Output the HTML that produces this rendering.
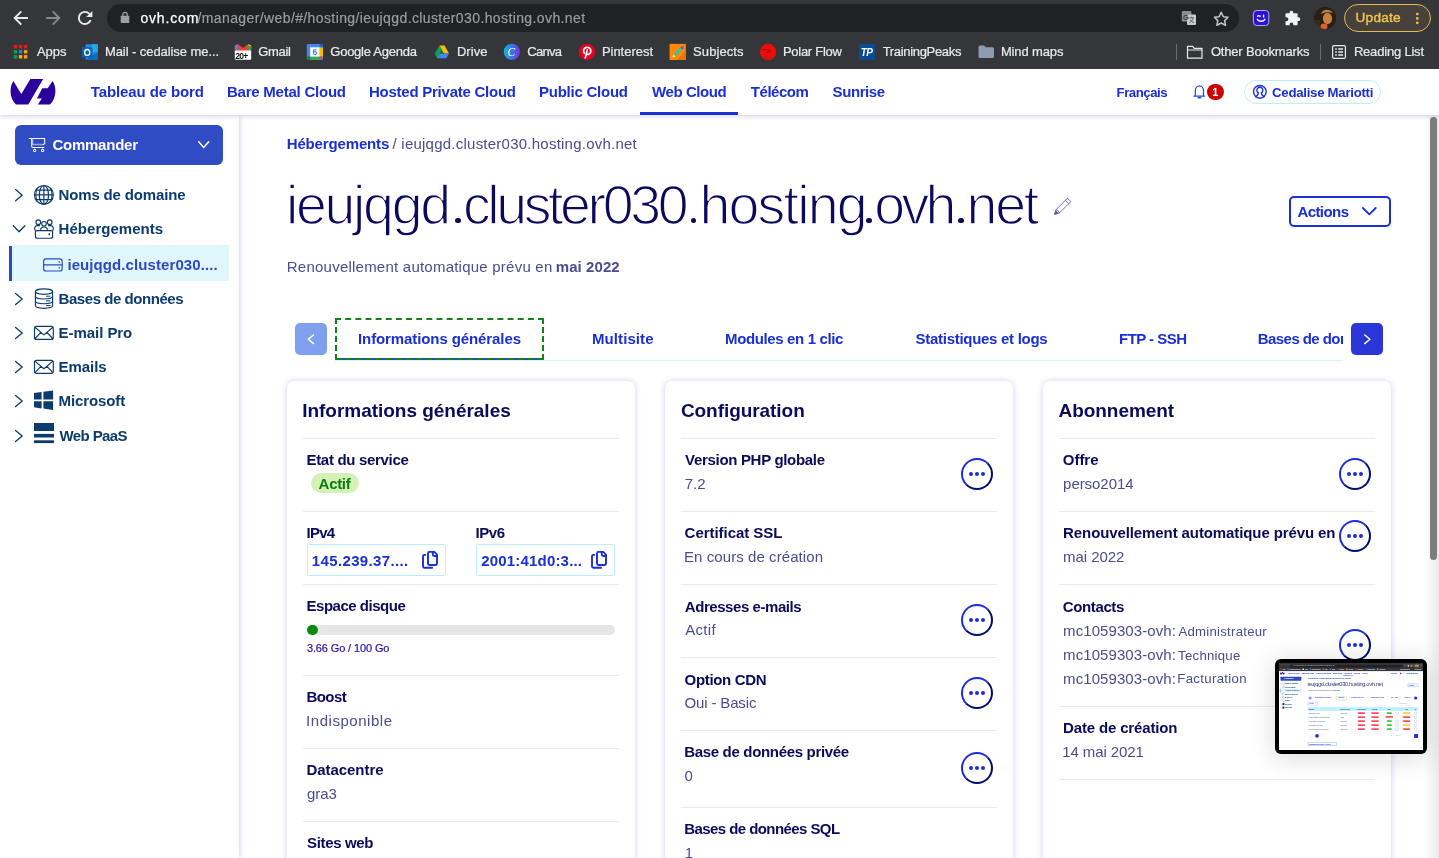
<!DOCTYPE html>
<html lang="fr"><head><meta charset="utf-8"><title>OVH Manager</title>
<style>
html,body{margin:0;padding:0}
body{width:1439px;height:858px;overflow:hidden;position:relative;background:#fff;font-family:"Liberation Sans",sans-serif}
.a{position:absolute}
.t{position:absolute;white-space:nowrap;line-height:1}
.hr{position:absolute;height:1px;background:#ebebee}
.card{position:absolute;top:381px;width:348px;height:520px;background:#fff;border-radius:7px;box-shadow:0 0 6px 0 rgba(0,14,156,.2)}
.dots{position:absolute;width:28px;height:28px;border-radius:50%;border:2px solid;border-color:#1c2cdc #00106e #00106e #1c2cdc}
.dots i{position:absolute;top:12px;width:4px;height:4px;border-radius:50%;background:#1c2cdc}
svg{position:absolute;overflow:visible}
</style></head><body><div id="root" class="a" style="left:0;top:0;width:1439px;height:858px;overflow:hidden;will-change:transform">

<!-- ===== page: sidebar ===== -->
<div class="a" style="left:0;top:115px;width:239px;height:743px;background:#fff;box-shadow:1px 0 5px 0 rgba(0,14,156,.18)"></div>
<div class="a" style="left:15px;top:125px;width:208px;height:40px;border-radius:6px;background:#2f4cc4"></div>
<div class="a" style="left:9px;top:245px;width:220px;height:36px;background:#e0f6fd"></div>
<div class="a" style="left:9px;top:246px;width:3px;height:35px;background:#2e49c2"></div>
<svg class="a" style="left:0;top:0" width="240" height="858" viewBox="0 0 240 858" fill="none" stroke="#0c3b6e" stroke-width="1.3" stroke-linecap="round" stroke-linejoin="round">
<path d="M15.6 189.6 L22.2 195.2 L15.6 200.79999999999998"/>
<path d="M15.6 293.4 L22.2 299 L15.6 304.6"/>
<path d="M15.6 327.4 L22.2 333 L15.6 338.6"/>
<path d="M15.6 361.4 L22.2 367 L15.6 372.6"/>
<path d="M15.6 395.4 L22.2 401 L15.6 406.6"/>
<path d="M15.6 430.4 L22.2 436 L15.6 441.6"/>
<path d="M13.3 225.8 L19.1 231.7 L24.9 225.8"/>
<g stroke-width="1.2"><circle cx="43.9" cy="194.9" r="9.4"/><ellipse cx="43.9" cy="194.9" rx="4.6" ry="9.4"/><path d="M43.9 185.5V204.3M34.5 194.9H53.3M35.7 190.20000000000002H52.099999999999994M35.7 199.6H52.099999999999994"/><path d="M36.699999999999996 188.9Q34.9 194.9 36.699999999999996 200.9M51.1 188.9Q52.9 194.9 51.1 200.9" stroke-width=".9"/></g>
<g stroke-width="1.15"><circle cx="38.3" cy="222.2" r="2.3"/><circle cx="44" cy="223.8" r="2.3"/><circle cx="49.7" cy="222.2" r="2.3"/><path d="M35.3 230.5 C34 229 34.6 226 37 225.6 L39.5 225.6 M52.7 230.5 C54 229 53.4 226 51 225.6 L48.5 225.6 M40.6 229.5 C40.8 227.6 42 227 44 227 C46 227 47.2 227.6 47.4 229.5"/><rect x="35.4" y="230.6" width="17.2" height="7.6" rx="2"/><path d="M49.3 233.8v.9" stroke-width="1.4"/></g>
<g stroke-width="1.15"><ellipse cx="44" cy="291.6" rx="8.6" ry="2.7"/><path d="M35.4 291.6V305.6C35.4 307.2 39.2 308.3 44 308.3S52.6 307.2 52.6 305.6V291.6"/><path d="M35.4 296.3C35.4 297.9 39.2 299 44 299S52.6 297.9 52.6 296.3M35.4 301C35.4 302.6 39.2 303.7 44 303.7S52.6 302.6 52.6 301"/><path d="M46.5 296.2h3.5M46.5 300.9h3.5M46.5 305.6h3.5" stroke-width="1"/></g>
<g stroke-width="1.15"><rect x="34.5" y="326.4" width="18.8" height="13" rx="2"/><path d="M35.2 327.5L43.9 334.9L52.6 327.5M35.2 338.5L40.8 332.4M52.6 338.5L47 332.4"/></g>
<g stroke-width="1.15"><rect x="34.5" y="360.3" width="18.8" height="13" rx="2"/><path d="M35.2 361.40000000000003L43.9 368.8L52.6 361.40000000000003M35.2 372.40000000000003L40.8 366.3M52.6 372.40000000000003L47 366.3"/></g>
<g fill="#0c3b6e" stroke="none"><path d="M34 393.1L41.6 392V399.6H34Z M43.4 391.8L53.1 390.4V399.6H43.4Z M34 401.3H41.6V408.4L34 407.3Z M43.4 401.3H53.1V410L43.4 408.6Z"/></g>
<g fill="#0c3b6e" stroke="none"><rect x="34" y="423" width="20" height="8"/><rect x="34" y="433.9" width="20" height="3.6"/><rect x="34" y="440.3" width="20" height="2.8"/></g>
<g stroke="#2e49c2" stroke-width="1.15"><rect x="43.6" y="258.8" width="18.6" height="12.2" rx="2.6"/><path d="M43.8 264.9H62"/><path d="M59.2 261.6v.6M59.2 267.5v.6" stroke-width="1.3"/></g>
<g stroke="#fff" stroke-width="1.05" stroke-linecap="round" stroke-linejoin="round"><path d="M29.3 138.5H44.7V143.5L43.3 144.7"/><path d="M31.7 138.7V146.2Q31.7 147.4 32.9 147.4H43.8"/><path d="M32.6 139.3V144.4H43" stroke-opacity=".5" stroke-width="1.5" stroke-linecap="butt"/><circle cx="34.6" cy="150.4" r="1.15"/><circle cx="42.6" cy="150.4" r="1.15"/></g>
<path d="M198.7 141.7L203.7 147.5L208.7 141.7" stroke="#fff" stroke-width="1.45"/>
</svg>

<!-- ===== page: header area ===== -->
<div class="a" style="left:1289px;top:195.5px;width:98px;height:27px;border:2px solid #1a2fd6;border-radius:5px"></div>


<!-- tabs -->
<div class="a" style="left:335px;top:360px;width:1008px;height:1px;background:#d6f3fc"></div>
<div class="a" style="left:336px;top:358px;width:207px;height:2px;background:#2e49c2"></div>
<div class="a" style="left:335px;top:318px;width:205px;height:38px;border:2px dashed #138413"></div>
<div class="a" style="left:295px;top:323px;width:32px;height:32px;border-radius:5px;background:#7fa0ee"></div>
<div class="a" style="left:1351px;top:323px;width:32px;height:32px;border-radius:5px;background:#2a36d8"></div>
<div class="a" style="left:1258px;top:328px;width:85px;height:24px;overflow:hidden"><span class="t" style="left:-.2px;top:3.2px;font-size:15px;font-weight:700;color:#1a2fd6;letter-spacing:-.57px">Bases de données</span></div>

<!-- cards -->
<div class="card" style="left:287px"></div>
<div class="card" style="left:665px"></div>
<div class="card" style="left:1043px"></div>
<div class="hr" style="left:303px;top:438px;width:316px"></div>
<div class="hr" style="left:303px;top:511px;width:316px"></div>
<div class="hr" style="left:303px;top:584px;width:316px"></div>
<div class="hr" style="left:303px;top:675px;width:316px"></div>
<div class="hr" style="left:303px;top:748px;width:316px"></div>
<div class="hr" style="left:303px;top:821px;width:316px"></div>
<div class="hr" style="left:681px;top:438px;width:316px"></div>
<div class="hr" style="left:681px;top:511px;width:316px"></div>
<div class="hr" style="left:681px;top:584px;width:316px"></div>
<div class="hr" style="left:681px;top:657px;width:316px"></div>
<div class="hr" style="left:681px;top:730px;width:316px"></div>
<div class="hr" style="left:681px;top:807px;width:316px"></div>
<div class="hr" style="left:1059px;top:438px;width:316px"></div>
<div class="hr" style="left:1059px;top:511px;width:316px"></div>
<div class="hr" style="left:1059px;top:584px;width:316px"></div>
<div class="hr" style="left:1059px;top:706px;width:316px"></div>
<div class="hr" style="left:1059px;top:779px;width:316px"></div>
<div class="a" style="left:311px;top:473px;width:48px;height:20px;border-radius:10px;background:#d2f2b6"></div>
<div class="a" style="left:307px;top:544px;width:137px;height:30px;border:1px solid #bdeefe;border-radius:2px"></div>
<div class="a" style="left:476px;top:544px;width:137px;height:30px;border:1px solid #bdeefe;border-radius:2px"></div>
<div class="a" style="left:307px;top:625px;width:308px;height:10px;border-radius:5px;background:#e6e6e6"></div>
<div class="a" style="left:307px;top:625px;width:11px;height:10px;border-radius:5px;background:#0b8b0b"></div>
<div class="dots" style="left:961px;top:458px"><i style="left:6px"></i><i style="left:12px"></i><i style="left:18px"></i></div>
<div class="dots" style="left:961px;top:604px"><i style="left:6px"></i><i style="left:12px"></i><i style="left:18px"></i></div>
<div class="dots" style="left:961px;top:677px"><i style="left:6px"></i><i style="left:12px"></i><i style="left:18px"></i></div>
<div class="dots" style="left:961px;top:752px"><i style="left:6px"></i><i style="left:12px"></i><i style="left:18px"></i></div>
<div class="dots" style="left:1339px;top:458px"><i style="left:6px"></i><i style="left:12px"></i><i style="left:18px"></i></div>
<div class="dots" style="left:1339px;top:520px"><i style="left:6px"></i><i style="left:12px"></i><i style="left:18px"></i></div>
<div class="dots" style="left:1339px;top:629px"><i style="left:6px"></i><i style="left:12px"></i><i style="left:18px"></i></div>

<svg class="a" style="left:0;top:0" width="1439" height="600" viewBox="0 0 1439 600" fill="none" stroke-linecap="round" stroke-linejoin="round">
<g stroke="#5a5aaa" stroke-width=".85"><path d="M1054.8 214L1056.3 209.4L1067.5 198.2L1070.9 201.6L1059.6 212.7Z"/><path d="M1065.4 200.3L1068.7 203.6M1056.3 209.4L1059.6 212.7"/><path d="M1054.8 214L1055.8 210.9L1057.9 213Z" fill="#4a4aa0"/></g>
<path stroke="#1a2fd6" stroke-width="1.8" d="M1362.9 208L1369.3 214.4L1375.7 208"/>
<path stroke="#fff" stroke-width="1.4" d="M313.5 335 L308.3 339.3 L313.5 343.6"/>
<path stroke="#fff" stroke-width="1.4" d="M1364.7 335 L1369.9 339.3 L1364.7 343.6"/>
<g stroke="#1a2fd6" stroke-width="1.9" stroke-linecap="round" stroke-linejoin="round"><path d="M428.0 553.4Q428.0 551.9 429.2 551.9H434.3L437.0 554.6V563.6Q437.0 565 435.5 565H429.5Q428.0 565 428.0 563.6Z"/><path d="M432.8 552.3V554.5Q432.8 556 434.3 556H436.7"/><path d="M425.3 554.9H424.4Q423.0 554.9 423.0 556.3V566.3Q423.0 567.7 424.4 567.7H432.1"/></g>
<g stroke="#1a2fd6" stroke-width="1.9" stroke-linecap="round" stroke-linejoin="round"><path d="M597.0 553.4Q597.0 551.9 598.5 551.9H603.3L606.0 554.6V563.6Q606.0 565 604.5 565H598.5Q597.0 565 597.0 563.6Z"/><path d="M601.8 552.3V554.5Q601.8 556 603.3 556H605.7"/><path d="M594.3 554.9H593.4Q592.0 554.9 592.0 556.3V566.3Q592.0 567.7 593.4 567.7H601.1"/></g>
</svg>

<!-- scrollbar -->
<div class="a" style="left:1424px;top:115px;width:15px;height:743px;background:linear-gradient(90deg,#fff,#f3f3f4 60%,#e9e9eb)"></div>
<div class="a" style="left:1430px;top:117px;width:7px;height:443px;border-radius:4px;background:#7b7c7e"></div>

<!-- ===== OVH top nav ===== -->
<div class="a" style="left:0;top:69px;width:1439px;height:46px;background:#fff;box-shadow:0 1px 5px 0 rgba(0,14,156,.2)"></div>
<div class="a" style="left:640px;top:112px;width:98px;height:3px;background:#1a2fd6"></div>
<div class="a" style="left:1244px;top:80px;width:135px;height:22px;border:1px solid #bdeefe;border-radius:12px"></div>
<div class="a" style="left:1207.2px;top:83.6px;width:16.6px;height:16.6px;border-radius:50%;background:#cc0000"></div>
<svg class="a" style="left:0;top:0" width="1439" height="120" viewBox="0 0 1439 120" fill="none">
<path fill="#2a009e" d="M13.4 80.9 L21.3 93.9 L30.4 79 H43.2 L28.3 104.6 H16 C9.3 98 9.3 87 13.4 80.9Z M52.6 80.9 L47.7 88.3 H42.3 L36.9 98.6 H41.8 L37.9 104.6 H50 C56.7 98 56.7 87 52.6 80.9Z"/>
<g stroke="#2746de" stroke-width="1.25" stroke-linecap="round" stroke-linejoin="round"><path d="M1193.9 96.1H1204.7M1195.3 96V90.8A4.1 4.9 0 0 1 1203.5 90.8V96"/><path d="M1198.2 97.7H1200.6" stroke-width="1.5"/></g>
<g stroke="#1a2fd6" stroke-width="1.4" stroke-linecap="round"><circle cx="1259.85" cy="91.85" r="6.35"/><path d="M1258.4 92.9A3 3 0 1 1 1261.3 92.9C1261.4 94.8 1262.6 95.6 1263.9 96.7M1258.4 92.9C1258.3 94.8 1257.1 95.6 1255.8 96.7"/></g>
</svg>

<!-- ===== browser chrome ===== -->
<div class="a" style="left:0;top:0;width:1439px;height:69px;background:#35363a"></div>
<div class="a" style="left:107px;top:4px;width:1132px;height:28px;border-radius:14px;background:#202124"></div>
<div class="a" style="left:1343.5px;top:3.8px;width:85.5px;height:26.4px;border:1px solid #e5b94e;border-radius:14px;background:rgba(241,193,80,.09)"></div>
<div class="a" style="left:1176px;top:44px;width:1px;height:16px;background:#6b6d71"></div>
<div class="a" style="left:1320px;top:44px;width:1px;height:16px;background:#6b6d71"></div>
<svg class="a" style="left:0;top:0" width="1439" height="69" viewBox="0 0 1439 69" fill="none" stroke-linecap="butt" stroke-linejoin="miter" font-family="Liberation Sans, sans-serif">
<path stroke="#e8eaed" stroke-width="1.9" d="M27.9 18H15.6M21.3 11.4L14.7 18L21.3 24.6"/>
<path stroke="#87898c" stroke-width="1.9" d="M46.1 18H58.4M52.7 11.4L59.3 18L52.7 24.6"/>
<path stroke="#e8eaed" stroke-width="1.9" d="M90.6 20.2A6.1 6.1 0 1 1 89.4 13.8"/><path fill="#e8eaed" d="M92.4 10.9V17.1H86.2Z"/>
<rect x="120.7" y="15.7" width="8.6" height="7.3" rx=".8" fill="#9aa0a6"/><path stroke="#9aa0a6" stroke-width="1.3" d="M122.8 15.9V14.6A2.2 2.2 0 0 1 127.2 14.6V15.9"/>
<rect x="1181.8" y="11" width="9.6" height="10.6" rx="1" fill="#8a8d92"/><rect x="1187" y="14.6" width="9" height="10.4" rx="1" fill="#c7c9cc"/><text x="1183" y="19.6" font-size="7.5" font-weight="700" fill="#35363a">G</text><path stroke="#55575b" stroke-width=".9" d="M1189.2 17.8h4.8M1191.6 16.8v1M1193.2 18c-.5 2-1.8 3.6-3.8 4.6M1190.4 19.8c.8 1.3 2 2.3 3.6 2.9"/>
<path stroke="#c4c7cb" stroke-width="1.5" stroke-linejoin="round" d="M1221.2 12.3L1223.3 16.7L1228 17.3L1224.6 20.6L1225.5 25.3L1221.2 23L1216.9 25.3L1217.8 20.6L1214.4 17.3L1219.1 16.7Z"/>
<rect x="1253.4" y="10.5" width="15.4" height="15" rx="3.4" fill="#2b10d6" stroke="#cfd0ff" stroke-width=".8"/><path stroke="#fff" stroke-width="1.4" stroke-linecap="round" d="M1257.3 19.3C1259 21.8 1263.2 21.8 1264.9 19.3M1263.6 15.3v1.6M1257.6 16.3c.8-.9 1.7-.9 2.5 0"/>
<path fill="#f1f3f4" d="M1291.4 10.7a1.8 1.8 0 0 1 1.8 1.8v.7h3.3a1.1 1.1 0 0 1 1.1 1.1v3h.8a1.9 1.9 0 0 1 0 3.8h-.8v3.1a1.1 1.1 0 0 1-1.1 1.1h-3.1v-.9a1.9 1.9 0 0 0-3.8 0v.9h-3a1.1 1.1 0 0 1-1.1-1.1v-3h.9a1.95 1.95 0 0 0 0-3.9h-.9v-3a1.1 1.1 0 0 1 1.1-1.1h3v-.7a1.8 1.8 0 0 1 1.8-1.8z"/>
<defs><clipPath id="av"><circle cx="1325.2" cy="18" r="11"/></clipPath><linearGradient id="cv" x1="0" x2="1"><stop offset="0" stop-color="#16b5dc"/><stop offset=".45" stop-color="#2f7ee6"/><stop offset="1" stop-color="#7a2be6"/></linearGradient></defs>
<g clip-path="url(#av)"><rect x="1314" y="7" width="23" height="23" fill="#2a1d16"/><ellipse cx="1327.5" cy="18.5" rx="4.6" ry="5.8" fill="#c9803e"/><path d="M1321 14c1-5 9-6 12-1c-3-1.5-8-1-12 1z" fill="#a88a4a"/><ellipse cx="1324" cy="26.5" rx="3.5" ry="3" fill="#d9652a"/><rect x="1314" y="20" width="6" height="10" fill="#3b2a1a"/></g>
<circle cx="1417.3" cy="14" r="1.35" fill="#f1c150"/>
<circle cx="1417.3" cy="18.4" r="1.35" fill="#f1c150"/>
<circle cx="1417.3" cy="22.8" r="1.35" fill="#f1c150"/>
<rect x="13.8" y="45.00" width="3.4" height="3.4" fill="#ea1a1a"/>
<rect x="18.85" y="45.00" width="3.4" height="3.4" fill="#ea1a1a"/>
<rect x="23.9" y="45.00" width="3.4" height="3.4" fill="#ea1a1a"/>
<rect x="13.8" y="50.05" width="3.4" height="3.4" fill="#0aa34c"/>
<rect x="18.85" y="50.05" width="3.4" height="3.4" fill="#1a86f5"/>
<rect x="23.9" y="50.05" width="3.4" height="3.4" fill="#ffa000"/>
<rect x="13.8" y="55.1" width="3.4" height="3.4" fill="#0aa34c"/>
<rect x="18.85" y="55.1" width="3.4" height="3.4" fill="#ffb400"/>
<rect x="23.9" y="55.1" width="3.4" height="3.4" fill="#ffa000"/>
<rect x="85.5" y="44.2" width="12.3" height="15.6" rx="1" fill="#1490df"/><path d="M91.6 44.2h6.2v7.8h-6.2z" fill="#28a8ea"/><path d="M85.5 59.8l12.3-7.8v6.8a1 1 0 0 1-1 1z" fill="#0a6ebd"/><rect x="82" y="47.2" width="10.4" height="10.4" rx="1" fill="#0f5fb8"/><ellipse cx="87.2" cy="52.4" rx="2.6" ry="2.9" stroke="#fff" stroke-width="1.3"/>
<path d="M234.8 45.5l3-1.5l5.2 4l5.2-4l3 1.5v5.5h-16.4z" fill="#ea4335"/><path d="M234.8 45.5l3-1.2v7h-3z" fill="#4285f4"/><path d="M251.2 45.5l-3-1.2v7h3z" fill="#34a853"/><path d="M248.2 44.2l3 1.3l-1 .8l-2-1z" fill="#fbbc04"/><path d="M237.8 45.2L243 49.2L248.2 45.2V48.2L243 52L237.8 48.2Z" fill="#ea4335"/><rect x="234.8" y="50.5" width="16.4" height="9.2" rx="1" fill="#fff"/><text x="235.2" y="58.6" font-size="8.6" font-weight="700" letter-spacing="-.7" fill="#111">20+</text>
<rect x="306.8" y="43.9" width="16.2" height="16.1" rx="1.6" fill="#4285f4"/><rect x="319.6" y="47.3" width="3.4" height="9.3" fill="#fbbc04"/><rect x="310.2" y="56.6" width="9.4" height="3.4" fill="#34a853"/><path d="M306.8 56.6h3.4v3.4h-1.8a1.6 1.6 0 0 1-1.6-1.6z" fill="#188038"/><path d="M319.6 56.6h3.4l-3.4 3.4z" fill="#ea4335"/><path d="M319.6 43.9h1.8a1.6 1.6 0 0 1 1.6 1.6v1.8h-3.4z" fill="#1967d2"/><rect x="310.2" y="47.3" width="9.4" height="9.3" fill="#fff"/><text x="312.4" y="55.3" font-size="8.6" font-weight="700" fill="#4285f4">6</text>
<path d="M439.3 45.6h5.2l4.5 7.9h-5.2z" fill="#fbbc04"/><path d="M439.3 45.6l2.6 4.5l-4.7 8.1l-2.5-4.4z" fill="#0f9d58"/><path d="M437.2 58.2l2.6-4.7h9.2l-2.6 4.7z" fill="#4285f4"/><path d="M441.9 50.1l1.9 3.4h-3.9z" fill="#188038" opacity=".6"/>
<circle cx="511.9" cy="51.8" r="8.1" fill="url(#cv)"/><text x="507.6" y="56" font-size="11.5" font-style="italic" font-family="Liberation Serif, serif" fill="#fff">C</text>
<circle cx="586.9" cy="51.8" r="8.1" fill="#e60023"/><path stroke="#fff" stroke-width="1.7" stroke-linecap="round" d="M584.3 53.3C582.3 50.3 584.3 47.3 587.3 47.3C590.3 47.3 591.6 50.3 590.3 52.8C589.3 54.6 587.3 54.8 586.6 53.6M587.3 49.9L585.3 57.9"/>
<rect x="669.6" y="43.9" width="16.2" height="16.1" fill="#ff8a00"/><path d="M685.8 51v9h-9z" fill="#e67600"/><path stroke="#2bc4b6" stroke-width="3" stroke-linecap="butt" d="M674.6 55.3L681.6 48.3"/><path stroke="#8d3fd0" stroke-width="3" d="M681.4 48.5L683 46.9"/><path d="M672.2 57.6l1.3-3.3l2.1 2.1z" fill="#f3d9b0"/>
<circle cx="768.1" cy="51.9" r="8.1" fill="#f20a0a"/><path d="M760.6 54.9C763.6 57.6 772.4 57.6 775.6 54.9A8.1 8.1 0 0 1 760.6 54.9Z" fill="#cc1414"/><path stroke="#a80f0f" stroke-width="1.35" stroke-linecap="round" d="M762.2 49.6H768.6A1.35 1.35 0 0 1 768.6 52.3H766.6"/>
<rect x="859" y="44" width="16" height="15.9" fill="#0a4b96"/><text x="860.7" y="56" font-size="10" font-weight="700" font-style="italic" letter-spacing="-.55" fill="#fff">TP</text>
<path d="M978.5 47a1.6 1.6 0 0 1 1.6-1.6h4l1.7 1.8h6.6a1.6 1.6 0 0 1 1.6 1.6v7.7a1.6 1.6 0 0 1-1.6 1.6h-12.3a1.6 1.6 0 0 1-1.6-1.6z" fill="#8c9db3"/>
<path stroke="#e8eaed" stroke-width="1.2" stroke-linejoin="round" d="M1187.5 46.4h5.2l1.6 1.9h7.7v9.9h-14.5z M1187.5 50h14.5"/>
<rect x="1332.6" y="45.6" width="12.8" height="12.8" rx="1.2" stroke="#e8eaed" stroke-width="1.2"/><path stroke="#e8eaed" stroke-width="1.3" d="M1335.2 49h1.6M1338.2 49h4.8M1335.2 52h1.6M1338.2 52h4.8M1335.2 55h1.6M1338.2 55h4.8"/>
</svg>

<div class="a" style="left:0;top:0;width:1439px;height:858px;will-change:transform">
<span class="t" style="left:140.4px;top:11.15px;font-size:14px;font-weight:400;color:#ffffff;letter-spacing:0.848px;-webkit-text-stroke:.25px #fff">ovh.com</span>
<span class="t" style="left:197.5px;top:11.15px;font-size:14px;font-weight:400;color:#9aa0a6;letter-spacing:0.389px;-webkit-text-stroke:.15px #9aa0a6">/manager/web/#/hosting/ieujqgd.cluster030.hosting.ovh.net</span>
<span class="t" style="left:37.0px;top:44.99px;font-size:13px;font-weight:400;color:#e8eaed;letter-spacing:-0.049px;-webkit-text-stroke:.22px #e8eaed">Apps</span>
<span class="t" style="left:104.9px;top:44.99px;font-size:13px;font-weight:400;color:#e8eaed;letter-spacing:-0.067px;-webkit-text-stroke:.22px #e8eaed">Mail - cedalise me...</span>
<span class="t" style="left:258.3px;top:44.99px;font-size:13px;font-weight:400;color:#e8eaed;letter-spacing:-0.357px;-webkit-text-stroke:.22px #e8eaed">Gmail</span>
<span class="t" style="left:330.3px;top:44.99px;font-size:13px;font-weight:400;color:#e8eaed;letter-spacing:-0.249px;-webkit-text-stroke:.22px #e8eaed">Google Agenda</span>
<span class="t" style="left:456.9px;top:44.99px;font-size:13px;font-weight:400;color:#e8eaed;letter-spacing:0.075px;-webkit-text-stroke:.22px #e8eaed">Drive</span>
<span class="t" style="left:527.3px;top:44.99px;font-size:13px;font-weight:400;color:#e8eaed;letter-spacing:-0.729px;-webkit-text-stroke:.22px #e8eaed">Canva</span>
<span class="t" style="left:601.9px;top:44.99px;font-size:13px;font-weight:400;color:#e8eaed;letter-spacing:-0.019px;-webkit-text-stroke:.22px #e8eaed">Pinterest</span>
<span class="t" style="left:693.1px;top:44.99px;font-size:13px;font-weight:400;color:#e8eaed;letter-spacing:0.069px;-webkit-text-stroke:.22px #e8eaed">Subjects</span>
<span class="t" style="left:782.9px;top:44.99px;font-size:13px;font-weight:400;color:#e8eaed;letter-spacing:-0.265px;-webkit-text-stroke:.22px #e8eaed">Polar Flow</span>
<span class="t" style="left:882.7px;top:44.99px;font-size:13px;font-weight:400;color:#e8eaed;letter-spacing:-0.322px;-webkit-text-stroke:.22px #e8eaed">TrainingPeaks</span>
<span class="t" style="left:1000.9px;top:44.99px;font-size:13px;font-weight:400;color:#e8eaed;letter-spacing:-0.130px;-webkit-text-stroke:.22px #e8eaed">Mind maps</span>
<span class="t" style="left:1210.9px;top:44.99px;font-size:13px;font-weight:400;color:#e8eaed;letter-spacing:-0.184px;-webkit-text-stroke:.22px #e8eaed">Other Bookmarks</span>
<span class="t" style="left:1353.9px;top:44.99px;font-size:13px;font-weight:400;color:#e8eaed;letter-spacing:-0.193px;-webkit-text-stroke:.22px #e8eaed">Reading List</span>
<span class="t" style="left:1355.5px;top:11.38px;font-size:13.6px;font-weight:400;color:#f1c150;letter-spacing:0.262px;-webkit-text-stroke:.45px #f1c150">Update</span>
<span class="t" style="left:90.8px;top:84.10px;font-size:15px;font-weight:700;color:#1a2fd6;letter-spacing:-0.113px;">Tableau de bord</span>
<span class="t" style="left:227.0px;top:84.10px;font-size:15px;font-weight:700;color:#1a2fd6;letter-spacing:-0.236px;">Bare Metal Cloud</span>
<span class="t" style="left:369.0px;top:84.10px;font-size:15px;font-weight:700;color:#1a2fd6;letter-spacing:-0.248px;">Hosted Private Cloud</span>
<span class="t" style="left:539.0px;top:84.10px;font-size:15px;font-weight:700;color:#1a2fd6;letter-spacing:-0.244px;">Public Cloud</span>
<span class="t" style="left:652.0px;top:84.10px;font-size:15px;font-weight:700;color:#1a2fd6;letter-spacing:-0.418px;">Web Cloud</span>
<span class="t" style="left:750.8px;top:84.10px;font-size:15px;font-weight:700;color:#1a2fd6;letter-spacing:-0.460px;">Télécom</span>
<span class="t" style="left:832.6px;top:84.10px;font-size:15px;font-weight:700;color:#1a2fd6;letter-spacing:-0.431px;">Sunrise</span>
<span class="t" style="left:1116.6px;top:85.62px;font-size:13.2px;font-weight:700;color:#1a2fd6;letter-spacing:-0.475px;">Français</span>
<span class="t" style="left:1272.1px;top:85.62px;font-size:13.2px;font-weight:700;color:#1a2fd6;letter-spacing:-0.266px;">Cedalise Mariotti</span>
<span class="t" style="left:1212.2px;top:86.59px;font-size:11px;font-weight:700;color:#ffffff;letter-spacing:0.000px;">1</span>
<span class="t" style="left:52.4px;top:137.10px;font-size:15px;font-weight:700;color:#ffffff;letter-spacing:-0.236px;">Commander</span>
<span class="t" style="left:58.6px;top:187.10px;font-size:15px;font-weight:700;color:#0c3b6e;letter-spacing:-0.163px;">Noms de domaine</span>
<span class="t" style="left:58.6px;top:221.10px;font-size:15px;font-weight:700;color:#0c3b6e;letter-spacing:0.029px;">Hébergements</span>
<span class="t" style="left:58.6px;top:290.90px;font-size:15px;font-weight:700;color:#0c3b6e;letter-spacing:-0.447px;">Bases de données</span>
<span class="t" style="left:58.6px;top:325.00px;font-size:15px;font-weight:700;color:#0c3b6e;letter-spacing:-0.055px;">E-mail Pro</span>
<span class="t" style="left:58.6px;top:359.00px;font-size:15px;font-weight:700;color:#0c3b6e;letter-spacing:-0.071px;">Emails</span>
<span class="t" style="left:58.6px;top:393.10px;font-size:15px;font-weight:700;color:#0c3b6e;letter-spacing:-0.114px;">Microsoft</span>
<span class="t" style="left:59.6px;top:427.50px;font-size:15px;font-weight:700;color:#0c3b6e;letter-spacing:-0.609px;">Web PaaS</span>
<span class="t" style="left:67.4px;top:257.10px;font-size:15px;font-weight:700;color:#2e49c2;letter-spacing:0.090px;">ieujqgd.cluster030....</span>
<span class="t" style="left:286.7px;top:136.00px;font-size:15px;font-weight:700;color:#1a2fd6;letter-spacing:-0.144px;">Hébergements</span>
<span class="t" style="left:392.5px;top:135.90px;font-size:15px;font-weight:400;color:#4b4c91;letter-spacing:0.237px;">/ ieujqgd.cluster030.hosting.ovh.net</span>
<span class="t" style="left:286.0px;top:177.91px;font-size:55.5px;font-weight:400;color:#0b0a5e;letter-spacing:-2.318px;-webkit-text-stroke:1.5px #fff">ieujqgd</span>
<span class="t" style="left:462.9px;top:177.91px;font-size:55.5px;font-weight:400;color:#0b0a5e;letter-spacing:-3.384px;-webkit-text-stroke:1.5px #fff">cluster030</span>
<span class="t" style="left:699.4px;top:177.91px;font-size:55.5px;font-weight:400;color:#0b0a5e;letter-spacing:-1.774px;-webkit-text-stroke:1.5px #fff">hosting</span>
<span class="t" style="left:874.2px;top:177.91px;font-size:55.5px;font-weight:400;color:#0b0a5e;letter-spacing:-3.675px;-webkit-text-stroke:1.5px #fff">ovh</span>
<span class="t" style="left:966.6px;top:177.91px;font-size:55.5px;font-weight:400;color:#0b0a5e;letter-spacing:-2.282px;-webkit-text-stroke:1.5px #fff">net</span>
<span class="t" style="left:286.8px;top:258.90px;font-size:15px;font-weight:400;color:#4b4c91;letter-spacing:0.230px;">Renouvellement automatique prévu en</span>
<span class="t" style="left:555.8px;top:258.90px;font-size:15px;font-weight:700;color:#4b4c91;letter-spacing:0.071px;">mai 2022</span>
<span class="t" style="left:1297.4px;top:203.60px;font-size:15px;font-weight:700;color:#1a2fd6;letter-spacing:-0.571px;">Actions</span>
<span class="t" style="left:358.0px;top:331.20px;font-size:15px;font-weight:700;color:#1a2fd6;letter-spacing:-0.097px;">Informations générales</span>
<span class="t" style="left:592.0px;top:331.20px;font-size:15px;font-weight:700;color:#1a2fd6;letter-spacing:0.084px;">Multisite</span>
<span class="t" style="left:725.0px;top:331.20px;font-size:15px;font-weight:700;color:#1a2fd6;letter-spacing:-0.361px;">Modules en 1 clic</span>
<span class="t" style="left:915.6px;top:331.20px;font-size:15px;font-weight:700;color:#1a2fd6;letter-spacing:-0.289px;">Statistiques et logs</span>
<span class="t" style="left:1119.0px;top:331.20px;font-size:15px;font-weight:700;color:#1a2fd6;letter-spacing:-0.528px;">FTP - SSH</span>
<span class="t" style="left:302.2px;top:400.91px;font-size:19px;font-weight:700;color:#0b0b5c;letter-spacing:-0.024px;">Informations générales</span>
<span class="t" style="left:680.9px;top:400.91px;font-size:19px;font-weight:700;color:#0b0b5c;letter-spacing:-0.056px;">Configuration</span>
<span class="t" style="left:1058.5px;top:400.91px;font-size:19px;font-weight:700;color:#0b0b5c;letter-spacing:-0.045px;">Abonnement</span>
<span class="t" style="left:306.5px;top:452.00px;font-size:15px;font-weight:700;color:#0b0b5c;letter-spacing:-0.314px;">Etat du service</span>
<span class="t" style="left:318.6px;top:475.90px;font-size:15px;font-weight:700;color:#0b7d0b;letter-spacing:-0.300px;">Actif</span>
<span class="t" style="left:306.5px;top:525.10px;font-size:15px;font-weight:700;color:#0b0b5c;letter-spacing:-0.758px;">IPv4</span>
<span class="t" style="left:475.6px;top:525.10px;font-size:15px;font-weight:700;color:#0b0b5c;letter-spacing:-0.471px;">IPv6</span>
<span class="t" style="left:311.8px;top:553.10px;font-size:15px;font-weight:700;color:#1a2fd6;letter-spacing:0.364px;">145.239.37....</span>
<span class="t" style="left:481.2px;top:553.10px;font-size:15px;font-weight:700;color:#1a2fd6;letter-spacing:0.188px;">2001:41d0:3...</span>
<span class="t" style="left:306.5px;top:598.30px;font-size:15px;font-weight:700;color:#0b0b5c;letter-spacing:-0.478px;">Espace disque</span>
<span class="t" style="left:306.9px;top:643.49px;font-size:11px;font-weight:400;color:#2a0fa0;letter-spacing:-0.121px;-webkit-text-stroke:.2px #2a0fa0">3.66 Go / 100 Go</span>
<span class="t" style="left:306.5px;top:689.10px;font-size:15px;font-weight:700;color:#0b0b5c;letter-spacing:-0.578px;">Boost</span>
<span class="t" style="left:306.1px;top:713.20px;font-size:15px;font-weight:400;color:#4b4c91;letter-spacing:0.535px;">Indisponible</span>
<span class="t" style="left:306.5px;top:762.00px;font-size:15px;font-weight:700;color:#0b0b5c;letter-spacing:-0.059px;">Datacentre</span>
<span class="t" style="left:306.9px;top:786.10px;font-size:15px;font-weight:400;color:#4b4c91;letter-spacing:-0.014px;">gra3</span>
<span class="t" style="left:307.1px;top:834.60px;font-size:15px;font-weight:700;color:#0b0b5c;letter-spacing:-0.357px;">Sites web</span>
<span class="t" style="left:685.1px;top:452.00px;font-size:15px;font-weight:700;color:#0b0b5c;letter-spacing:-0.316px;">Version PHP globale</span>
<span class="t" style="left:684.7px;top:476.10px;font-size:15px;font-weight:400;color:#4b4c91;letter-spacing:-0.018px;">7.2</span>
<span class="t" style="left:684.6px;top:525.10px;font-size:15px;font-weight:700;color:#0b0b5c;letter-spacing:-0.037px;">Certificat SSL</span>
<span class="t" style="left:684.0px;top:549.20px;font-size:15px;font-weight:400;color:#4b4c91;letter-spacing:0.075px;">En cours de création</span>
<span class="t" style="left:684.8px;top:598.50px;font-size:15px;font-weight:700;color:#0b0b5c;letter-spacing:-0.441px;">Adresses e-mails</span>
<span class="t" style="left:685.2px;top:621.90px;font-size:15px;font-weight:400;color:#4b4c91;letter-spacing:0.305px;">Actif</span>
<span class="t" style="left:684.6px;top:671.50px;font-size:15px;font-weight:700;color:#0b0b5c;letter-spacing:-0.340px;">Option CDN</span>
<span class="t" style="left:684.5px;top:695.10px;font-size:15px;font-weight:400;color:#4b4c91;letter-spacing:-0.145px;">Oui - Basic</span>
<span class="t" style="left:684.2px;top:744.40px;font-size:15px;font-weight:700;color:#0b0b5c;letter-spacing:-0.321px;">Base de données privée</span>
<span class="t" style="left:684.6px;top:768.10px;font-size:15px;font-weight:400;color:#4b4c91;letter-spacing:0.000px;">0</span>
<span class="t" style="left:684.2px;top:821.40px;font-size:15px;font-weight:700;color:#0b0b5c;letter-spacing:-0.567px;">Bases de données SQL</span>
<span class="t" style="left:684.7px;top:845.30px;font-size:15px;font-weight:400;color:#4b4c91;letter-spacing:0.000px;">1</span>
<span class="t" style="left:1062.8px;top:452.00px;font-size:15px;font-weight:700;color:#0b0b5c;letter-spacing:-0.029px;">Offre</span>
<span class="t" style="left:1063.1px;top:475.90px;font-size:15px;font-weight:400;color:#4b4c91;letter-spacing:-0.050px;">perso2014</span>
<span class="t" style="left:1063.1px;top:525.00px;font-size:15px;font-weight:700;color:#0b0b5c;letter-spacing:-0.102px;">Renouvellement automatique prévu en</span>
<span class="t" style="left:1063.1px;top:549.30px;font-size:15px;font-weight:400;color:#4b4c91;letter-spacing:-0.053px;">mai 2022</span>
<span class="t" style="left:1062.8px;top:599.30px;font-size:15px;font-weight:700;color:#0b0b5c;letter-spacing:-0.380px;">Contacts</span>
<span class="t" style="left:1063.1px;top:623.20px;font-size:15px;font-weight:400;color:#4b4c91;letter-spacing:0.078px;">mc1059303-ovh:</span>
<span class="t" style="left:1178.4px;top:624.72px;font-size:13.2px;font-weight:400;color:#4b4c91;letter-spacing:0.255px;">Administrateur</span>
<span class="t" style="left:1063.1px;top:647.30px;font-size:15px;font-weight:400;color:#4b4c91;letter-spacing:0.078px;">mc1059303-ovh:</span>
<span class="t" style="left:1178.1px;top:648.82px;font-size:13.2px;font-weight:400;color:#4b4c91;letter-spacing:0.257px;">Technique</span>
<span class="t" style="left:1063.1px;top:670.80px;font-size:15px;font-weight:400;color:#4b4c91;letter-spacing:0.078px;">mc1059303-ovh:</span>
<span class="t" style="left:1177.3px;top:672.32px;font-size:13.2px;font-weight:400;color:#4b4c91;letter-spacing:0.336px;">Facturation</span>
<span class="t" style="left:1063.1px;top:719.90px;font-size:15px;font-weight:700;color:#0b0b5c;letter-spacing:-0.159px;">Date de création</span>
<span class="t" style="left:1062.3px;top:744.30px;font-size:15px;font-weight:400;color:#4b4c91;letter-spacing:-0.109px;">14 mai 2021</span>
<div class="a" style="left:454.85px;top:217.6px;width:5.7px;height:5.7px;border-radius:50%;background:#0b0a5e"></div>
<div class="a" style="left:690.70px;top:217.6px;width:5.7px;height:5.7px;border-radius:50%;background:#0b0a5e"></div>
<div class="a" style="left:866.40px;top:217.6px;width:5.7px;height:5.7px;border-radius:50%;background:#0b0a5e"></div>
<div class="a" style="left:958.05px;top:217.6px;width:5.7px;height:5.7px;border-radius:50%;background:#0b0a5e"></div>
</div>

<div class="a" style="left:1275px;top:659px;width:152px;height:95px;border-radius:6px;background:#000;box-shadow:0 3px 26px 1px rgba(0,0,0,.15)"></div>
<div class="a" style="left:1279px;top:663px;width:144px;height:87px;overflow:hidden;background:#fff">
<div style="position:absolute;left:0;top:0;width:1440px;height:870px;transform:scale(.1);transform-origin:0 0;font-family:'Liberation Sans',sans-serif">
<div class="a" style="left:0;top:0;width:1440px;height:12px;background:#35363a"></div><div class="a" style="left:0;top:11px;width:1440px;height:860px"><div class="a" style="left:0px;top:0px;width:1440px;height:72px;background:#35363a"></div>
<div class="a" style="left:107px;top:5px;width:1132px;height:28px;border-radius:14px;background:#202124"></div>
<span class="t" style="left:141px;top:11px;font-size:14px;font-weight:400;color:#c8cace;">ovh.com/manager/web/#/hosting/ieujqgd.cluster030.hosting.ovh.net</span>
<div class="a" style="left:14px;top:45px;width:14px;height:15px;background:#e33;border-radius:3px"></div>
<div class="a" style="left:82px;top:45px;width:16px;height:15px;background:#1490df;border-radius:3px"></div>
<div class="a" style="left:234px;top:45px;width:16px;height:15px;background:#e8e8e8;border-radius:3px"></div>
<div class="a" style="left:307px;top:45px;width:16px;height:15px;background:#4285f4;border-radius:3px"></div>
<div class="a" style="left:435px;top:45px;width:14px;height:15px;background:#34a853;border-radius:3px"></div>
<div class="a" style="left:504px;top:45px;width:16px;height:15px;background:#4a6fe6;border-radius:3px"></div>
<div class="a" style="left:579px;top:45px;width:16px;height:15px;background:#e60023;border-radius:3px"></div>
<div class="a" style="left:670px;top:45px;width:16px;height:15px;background:#ff8a00;border-radius:3px"></div>
<div class="a" style="left:760px;top:45px;width:16px;height:15px;background:#ee1c25;border-radius:3px"></div>
<div class="a" style="left:859px;top:45px;width:16px;height:15px;background:#1a63c0;border-radius:3px"></div>
<div class="a" style="left:978px;top:45px;width:16px;height:15px;background:#8c9db3;border-radius:3px"></div>
<div class="a" style="left:37px;top:48px;width:29px;height:9px;background:#d5d7da;border-radius:2px;opacity:.75"></div>
<div class="a" style="left:106px;top:48px;width:112px;height:9px;background:#d5d7da;border-radius:2px;opacity:.75"></div>
<div class="a" style="left:259px;top:48px;width:31px;height:9px;background:#d5d7da;border-radius:2px;opacity:.75"></div>
<div class="a" style="left:331px;top:48px;width:86px;height:9px;background:#d5d7da;border-radius:2px;opacity:.75"></div>
<div class="a" style="left:458px;top:48px;width:29px;height:9px;background:#d5d7da;border-radius:2px;opacity:.75"></div>
<div class="a" style="left:528px;top:48px;width:34px;height:9px;background:#d5d7da;border-radius:2px;opacity:.75"></div>
<div class="a" style="left:603px;top:48px;width:50px;height:9px;background:#d5d7da;border-radius:2px;opacity:.75"></div>
<div class="a" style="left:694px;top:48px;width:49px;height:9px;background:#d5d7da;border-radius:2px;opacity:.75"></div>
<div class="a" style="left:784px;top:48px;width:58px;height:9px;background:#d5d7da;border-radius:2px;opacity:.75"></div>
<div class="a" style="left:883px;top:48px;width:78px;height:9px;background:#d5d7da;border-radius:2px;opacity:.75"></div>
<div class="a" style="left:1002px;top:48px;width:61px;height:9px;background:#d5d7da;border-radius:2px;opacity:.75"></div>
<div class="a" style="left:1211px;top:48px;width:98px;height:9px;background:#d5d7da;border-radius:2px;opacity:.75"></div>
<div class="a" style="left:1355px;top:48px;width:69px;height:9px;background:#d5d7da;border-radius:2px;opacity:.75"></div>
<div class="a" style="left:1253px;top:10px;width:16px;height:16px;background:#5a3cf0;border-radius:4px"></div>
<div class="a" style="left:1286px;top:10px;width:15px;height:15px;background:#e8eaed;border-radius:4px"></div>
<div class="a" style="left:1314px;top:7px;width:22px;height:22px;background:#c9803e;border-radius:50%"></div>
<div class="a" style="left:1344px;top:4px;width:86px;height:27px;border:2px solid #e5b94e;border-radius:14px;box-sizing:border-box"></div>
<div class="a" style="left:1357px;top:12px;width:42px;height:11px;background:#e5b94e;border-radius:2px"></div>
<div class="a" style="left:0px;top:72px;width:1440px;height:44px;background:#fff;box-shadow:0 2px 8px rgba(0,14,156,.25)"></div>
<svg class="a" style="left:0;top:0" width="60" height="120" viewBox="0 0 60 120"><path fill="#2a009e" d="M13.4 80.9L21.3 93.9L30.4 79H43.2L28.3 104.6H16C9.3 98 9.3 87 13.4 80.9ZM52.6 80.9L47.7 88.3H42.3L36.9 98.6H41.8L37.9 104.6H50C56.7 98 56.7 87 52.6 80.9Z"/></svg>
<span class="t" style="left:91px;top:85px;font-size:16px;font-weight:700;color:#1a2fd6;letter-spacing:-.6px">Tableau de bord</span>
<span class="t" style="left:228px;top:85px;font-size:16px;font-weight:700;color:#1a2fd6;letter-spacing:-.6px">Bare Metal Cloud</span>
<span class="t" style="left:370px;top:85px;font-size:16px;font-weight:700;color:#1a2fd6;letter-spacing:-.6px">Hosted Private Cloud</span>
<span class="t" style="left:540px;top:85px;font-size:16px;font-weight:700;color:#1a2fd6;letter-spacing:-.6px">Public Cloud</span>
<span class="t" style="left:652px;top:85px;font-size:16px;font-weight:700;color:#1a2fd6;letter-spacing:-.6px">Web Cloud</span>
<span class="t" style="left:751px;top:85px;font-size:16px;font-weight:700;color:#1a2fd6;letter-spacing:-.6px">Télécom</span>
<span class="t" style="left:833px;top:85px;font-size:16px;font-weight:700;color:#1a2fd6;letter-spacing:-.6px">Sunrise</span>
<span class="t" style="left:1117px;top:85px;font-size:16px;font-weight:700;color:#1a2fd6;letter-spacing:-.6px">Français</span>
<span class="t" style="left:1272px;top:85px;font-size:16px;font-weight:700;color:#1a2fd6;letter-spacing:-.6px">Cedalise Mariotti</span>
<div class="a" style="left:640px;top:112px;width:98px;height:4px;background:#1a2fd6"></div>
<div class="a" style="left:1208px;top:84px;width:17px;height:17px;background:#d8000c;border-radius:50%"></div>
<div class="a" style="left:0px;top:116px;width:240px;height:760px;background:#fff;box-shadow:2px 0 8px rgba(0,14,156,.2)"></div>
<div class="a" style="left:15px;top:126px;width:208px;height:40px;background:#2e49c2;border-radius:6px"></div>
<span class="t" style="left:53px;top:137px;font-size:16px;font-weight:700;color:#fff;">Commander</span>
<div class="a" style="left:9px;top:245px;width:220px;height:36px;background:#def5fd"></div>
<div class="a" style="left:9px;top:245px;width:4px;height:36px;background:#2e49c2"></div>
<span class="t" style="left:59px;top:187px;font-size:16px;font-weight:700;color:#0c3b6e;letter-spacing:-.5px">Noms de domaine</span>
<div class="a" style="left:34px;top:184px;width:20px;height:20px;border:2px solid #0c3b6e;border-radius:6px;box-sizing:border-box"></div>
<div class="a" style="left:15px;top:190px;width:7px;height:9px;background:#0c3b6e;opacity:.5"></div>
<span class="t" style="left:59px;top:221px;font-size:16px;font-weight:700;color:#0c3b6e;letter-spacing:-.5px">Hébergements</span>
<div class="a" style="left:34px;top:218px;width:20px;height:20px;border:2px solid #0c3b6e;border-radius:6px;box-sizing:border-box"></div>
<div class="a" style="left:15px;top:224px;width:7px;height:9px;background:#0c3b6e;opacity:.5"></div>
<span class="t" style="left:68px;top:257px;font-size:16px;font-weight:700;color:#2e49c2;letter-spacing:-.5px">ieujqgd.cluster030....</span>
<span class="t" style="left:59px;top:291px;font-size:16px;font-weight:700;color:#0c3b6e;letter-spacing:-.5px">Bases de données</span>
<div class="a" style="left:34px;top:288px;width:20px;height:20px;border:2px solid #0c3b6e;border-radius:6px;box-sizing:border-box"></div>
<div class="a" style="left:15px;top:294px;width:7px;height:9px;background:#0c3b6e;opacity:.5"></div>
<span class="t" style="left:59px;top:325px;font-size:16px;font-weight:700;color:#0c3b6e;letter-spacing:-.5px">E-mail Pro</span>
<div class="a" style="left:34px;top:322px;width:20px;height:20px;border:2px solid #0c3b6e;border-radius:6px;box-sizing:border-box"></div>
<div class="a" style="left:15px;top:328px;width:7px;height:9px;background:#0c3b6e;opacity:.5"></div>
<span class="t" style="left:59px;top:359px;font-size:16px;font-weight:700;color:#0c3b6e;letter-spacing:-.5px">Emails</span>
<div class="a" style="left:34px;top:356px;width:20px;height:20px;border:2px solid #0c3b6e;border-radius:6px;box-sizing:border-box"></div>
<div class="a" style="left:15px;top:362px;width:7px;height:9px;background:#0c3b6e;opacity:.5"></div>
<span class="t" style="left:59px;top:393px;font-size:16px;font-weight:700;color:#0c3b6e;letter-spacing:-.5px">Microsoft</span>
<div class="a" style="left:34px;top:390px;width:20px;height:20px;background:#0c3b6e"></div>
<div class="a" style="left:15px;top:396px;width:7px;height:9px;background:#0c3b6e;opacity:.5"></div>
<span class="t" style="left:59px;top:428px;font-size:16px;font-weight:700;color:#0c3b6e;letter-spacing:-.5px">Web PaaS</span>
<div class="a" style="left:34px;top:425px;width:20px;height:20px;background:#0c3b6e"></div>
<div class="a" style="left:15px;top:431px;width:7px;height:9px;background:#0c3b6e;opacity:.5"></div>
<span class="t" style="left:287px;top:136px;font-size:16px;font-weight:700;color:#1a2fd6;letter-spacing:-.5px">Hébergements / ieujqgd.cluster030.hosting.ovh.net / Multisite</span>

<span class="t" style="left:287px;top:259px;font-size:16px;font-weight:400;color:#4d5592;letter-spacing:-.6px">Renouvellement automatique prévu en <b>mai 2022</b></span>
<div class="a" style="left:1289px;top:196px;width:102px;height:31px;border:2px solid #1a2fd6;border-radius:5px;box-sizing:border-box"></div>
<span class="t" style="left:1298px;top:204px;font-size:15px;font-weight:700;color:#1a2fd6;letter-spacing:-.6px">Actions</span>
<div class="a" style="left:295px;top:323px;width:32px;height:32px;background:#7fa0ee;border-radius:16px"></div>
<div class="a" style="left:1351px;top:323px;width:32px;height:32px;background:#1a2fd6;border-radius:16px"></div>
<span class="t" style="left:359px;top:331px;font-size:16px;font-weight:700;color:#1a2fd6;letter-spacing:-.6px">Informations générales</span>
<span class="t" style="left:593px;top:331px;font-size:16px;font-weight:700;color:#1a2fd6;letter-spacing:-.6px">Multisite</span>
<span class="t" style="left:726px;top:331px;font-size:16px;font-weight:700;color:#1a2fd6;letter-spacing:-.6px">Modules en 1 clic</span>
<span class="t" style="left:916px;top:331px;font-size:16px;font-weight:700;color:#1a2fd6;letter-spacing:-.6px">Statistiques et logs</span>
<span class="t" style="left:1120px;top:331px;font-size:16px;font-weight:700;color:#1a2fd6;letter-spacing:-.6px">FTP - SSH</span>
<span class="t" style="left:1258px;top:331px;font-size:16px;font-weight:700;color:#1a2fd6;letter-spacing:-.6px">Bases d</span>
<div class="a" style="left:569px;top:318px;width:108px;height:42px;border:3px solid #5fb85f;border-radius:4px;box-sizing:border-box"></div>
</div><div class="a" style="left:288px;top:393px;width:100px;height:30px;border:2px solid #1a2fd6;border-radius:5px;box-sizing:border-box;opacity:.8"></div>
<span class="t" style="left:298px;top:401px;font-size:14px;font-weight:700;color:#1a2fd6;opacity:.8">Actions</span>
<div class="a" style="left:1200px;top:395px;width:187px;height:28px;border-bottom:2px solid #c9cde6;box-sizing:border-box"></div>
<span class="t" style="left:1206px;top:401px;font-size:14px;font-weight:400;color:#8d93bd;">Rechercher...</span>
<div class="a" style="left:286px;top:441px;width:1105px;height:38px;background:#bef1ff"></div>
<span class="t" style="left:294px;top:453px;font-size:15px;font-weight:700;color:#1c3a8c;letter-spacing:-.5px">Domaine</span>
<span class="t" style="left:612px;top:453px;font-size:15px;font-weight:700;color:#1c3a8c;letter-spacing:-.5px">Dossier racine</span>
<span class="t" style="left:778px;top:453px;font-size:15px;font-weight:700;color:#1c3a8c;letter-spacing:-.5px">Logs séparés</span>
<span class="t" style="left:930px;top:453px;font-size:15px;font-weight:700;color:#1c3a8c;letter-spacing:-.5px">Firewall</span>
<span class="t" style="left:1088px;top:453px;font-size:15px;font-weight:700;color:#1c3a8c;letter-spacing:-.5px">CDN</span>
<span class="t" style="left:1262px;top:453px;font-size:15px;font-weight:700;color:#1c3a8c;letter-spacing:-.5px">SSL</span>
<span class="t" style="left:1360px;top:453px;font-size:15px;font-weight:700;color:#1c3a8c;letter-spacing:-.5px">IP</span>
<span class="t" style="left:294px;top:493px;font-size:15px;font-weight:400;color:#4d5592;letter-spacing:-.5px">gallingcedrex.com</span>
<span class="t" style="left:612px;top:493px;font-size:15px;font-weight:400;color:#4d5592;letter-spacing:-.5px">./discerned</span>
<div class="a" style="left:286px;top:520px;width:1105px;height:2px;background:#e4f6fd"></div>
<div class="a" style="left:787px;top:493px;width:74px;height:17px;background:#ff4d5f;border-radius:8px"></div>
<div class="a" style="left:922px;top:493px;width:77px;height:17px;background:#ff4d5f;border-radius:8px"></div>
<div class="a" style="left:1077px;top:493px;width:52px;height:17px;background:#46c23c;border-radius:8px"></div>
<div class="a" style="left:1164px;top:485px;width:32px;height:32px;border:3px solid #8a96e8;border-radius:50%;box-sizing:border-box"></div>
<div class="a" style="left:1237px;top:493px;width:76px;height:17px;background:#ffcf33;border-radius:8px"></div>
<div class="a" style="left:1351px;top:485px;width:32px;height:32px;border:3px solid #8a96e8;border-radius:50%;box-sizing:border-box"></div>
<span class="t" style="left:294px;top:533px;font-size:15px;font-weight:400;color:#4d5592;letter-spacing:-.5px">ieujqgd.cluster030.hosting.ovh.net</span>
<span class="t" style="left:612px;top:533px;font-size:15px;font-weight:400;color:#4d5592;letter-spacing:-.5px">./www</span>
<div class="a" style="left:286px;top:560px;width:1105px;height:2px;background:#e4f6fd"></div>
<div class="a" style="left:787px;top:533px;width:74px;height:17px;background:#ff4d5f;border-radius:8px"></div>
<div class="a" style="left:922px;top:533px;width:77px;height:17px;background:#ff4d5f;border-radius:8px"></div>
<div class="a" style="left:1063px;top:530px;width:78px;height:17px;background:#ff4d5f;border-radius:8px"></div>
<div class="a" style="left:1237px;top:533px;width:76px;height:17px;background:#ff4d5f;border-radius:8px"></div>
<div class="a" style="left:1351px;top:525px;width:32px;height:32px;border:3px solid #8a96e8;border-radius:50%;box-sizing:border-box"></div>
<span class="t" style="left:294px;top:573px;font-size:15px;font-weight:400;color:#4d5592;letter-spacing:-.5px">jesuismotivee.ovuweb.com</span>
<span class="t" style="left:612px;top:573px;font-size:15px;font-weight:400;color:#4d5592;letter-spacing:-.5px">./discerned</span>
<div class="a" style="left:286px;top:600px;width:1105px;height:2px;background:#e4f6fd"></div>
<div class="a" style="left:787px;top:573px;width:74px;height:17px;background:#ff4d5f;border-radius:8px"></div>
<div class="a" style="left:922px;top:573px;width:77px;height:17px;background:#ff4d5f;border-radius:8px"></div>
<div class="a" style="left:1077px;top:573px;width:52px;height:17px;background:#46c23c;border-radius:8px"></div>
<div class="a" style="left:1164px;top:565px;width:32px;height:32px;border:3px solid #8a96e8;border-radius:50%;box-sizing:border-box"></div>
<div class="a" style="left:1237px;top:573px;width:76px;height:17px;background:#ff4d5f;border-radius:8px"></div>
<div class="a" style="left:1351px;top:565px;width:32px;height:32px;border:3px solid #8a96e8;border-radius:50%;box-sizing:border-box"></div>
<span class="t" style="left:294px;top:613px;font-size:15px;font-weight:400;color:#4d5592;letter-spacing:-.5px">www.gallingcedrex.com</span>
<span class="t" style="left:612px;top:613px;font-size:15px;font-weight:400;color:#4d5592;letter-spacing:-.5px">./discerned</span>
<div class="a" style="left:286px;top:640px;width:1105px;height:2px;background:#e4f6fd"></div>
<div class="a" style="left:787px;top:613px;width:74px;height:17px;background:#ff4d5f;border-radius:8px"></div>
<div class="a" style="left:922px;top:613px;width:77px;height:17px;background:#ff4d5f;border-radius:8px"></div>
<div class="a" style="left:1077px;top:613px;width:52px;height:17px;background:#46c23c;border-radius:8px"></div>
<div class="a" style="left:1164px;top:605px;width:32px;height:32px;border:3px solid #8a96e8;border-radius:50%;box-sizing:border-box"></div>
<div class="a" style="left:1237px;top:613px;width:76px;height:17px;background:#ffcf33;border-radius:8px"></div>
<div class="a" style="left:1351px;top:605px;width:32px;height:32px;border:3px solid #8a96e8;border-radius:50%;box-sizing:border-box"></div>
<span class="t" style="left:294px;top:653px;font-size:15px;font-weight:400;color:#4d5592;letter-spacing:-.5px">www.jesuismotivee.ovuweb.com</span>
<span class="t" style="left:612px;top:653px;font-size:15px;font-weight:400;color:#4d5592;letter-spacing:-.5px">./discerned</span>
<div class="a" style="left:286px;top:680px;width:1105px;height:2px;background:#e4f6fd"></div>
<div class="a" style="left:787px;top:653px;width:74px;height:17px;background:#ff4d5f;border-radius:8px"></div>
<div class="a" style="left:922px;top:653px;width:77px;height:17px;background:#ff4d5f;border-radius:8px"></div>
<div class="a" style="left:1077px;top:653px;width:52px;height:17px;background:#46c23c;border-radius:8px"></div>
<div class="a" style="left:1164px;top:645px;width:32px;height:32px;border:3px solid #8a96e8;border-radius:50%;box-sizing:border-box"></div>
<div class="a" style="left:1237px;top:653px;width:76px;height:17px;background:#ff4d5f;border-radius:8px"></div>
<div class="a" style="left:1351px;top:645px;width:32px;height:32px;border:3px solid #8a96e8;border-radius:50%;box-sizing:border-box"></div>
<div class="a" style="left:290px;top:713px;width:32px;height:32px;border:2px solid #c5d4f8;border-radius:50%;box-sizing:border-box"></div>
<div class="a" style="left:326px;top:713px;width:32px;height:32px;border:2px solid #c5d4f8;border-radius:50%;box-sizing:border-box"></div>
<div class="a" style="left:404px;top:713px;width:32px;height:32px;border:2px solid #c5d4f8;border-radius:50%;box-sizing:border-box"></div>
<div class="a" style="left:440px;top:713px;width:32px;height:32px;border:2px solid #c5d4f8;border-radius:50%;box-sizing:border-box"></div>
<div class="a" style="left:362px;top:711px;width:36px;height:36px;background:#1a2fd6;border-radius:50%"></div>
<div class="a" style="left:1351px;top:711px;width:40px;height:38px;background:#1a2fd6;border-radius:6px"></div>
<span class="t" style="left:1115px;top:722px;font-size:14px;font-weight:400;color:#8d93bd;">10 &nbsp; ▾ &nbsp;&nbsp; Page 1 / 1</span>
<div class="a" style="left:286px;top:793px;width:292px;height:34px;border:3px solid #5d74e6;border-radius:6px;box-sizing:border-box"></div>
<span class="t" style="left:298px;top:803px;font-size:14px;font-weight:700;color:#1a2fd6;letter-spacing:-.4px">Configuration du cluster et fichiers &nbsp; ▾</span>
</div></div>
<span class="t" style="left:1307.6px;top:682.4px;font-size:5.7px;color:#34346e;letter-spacing:-.33px">ieujqgd.cluster030.hosting.ovh.net</span>
</div></body></html>
